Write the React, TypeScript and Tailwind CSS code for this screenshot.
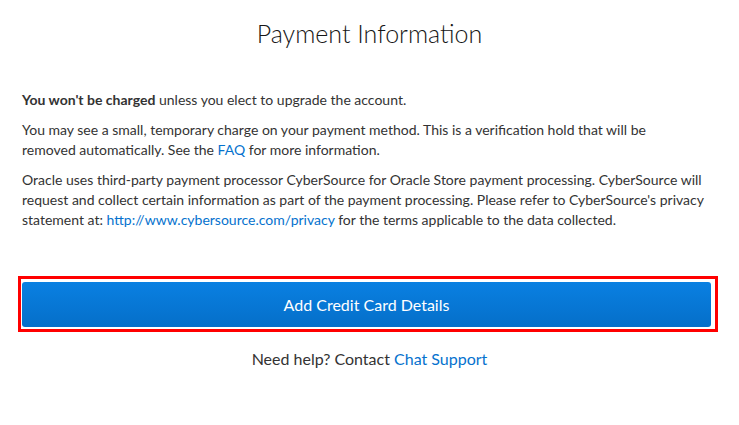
import React from 'react';

export default function App() {
  return (
    <div className="w-[739px] h-[425px] bg-white text-[#333333] font-['Lato',sans-serif]">
      <h1 className="pt-[17px] text-center text-[25px] leading-[32px] font-light text-[#161616]">
        Payment Information
      </h1>

      <div className="mt-[41px] px-[22px] text-[14px] leading-[20px] flex flex-col gap-[10px]">
        <p>
          <span className="font-bold">You won't be charged</span> unless you elect to upgrade the account.
        </p>
        <p>
          You may see a small, temporary charge on your payment method. This is a verification hold that will be
          <br />
          removed automatically. See the <a className="text-[#0572ce]">FAQ</a> for more information.
        </p>
        <p className="whitespace-nowrap">
          Oracle uses third-party payment processor CyberSource for Oracle Store payment processing. CyberSource will
          <br />
          request and collect certain information as part of the payment processing. Please refer to CyberSource's privacy
          <br />
          statement at: <a className="text-[#0572ce]">http://www.cybersource.com/privacy</a> for the terms applicable to
          the data collected.
        </p>
      </div>

      <div className="mt-[46px] ml-[18px] mr-[21px] border-[3px] border-[#ff0000] pt-[3px] pb-[2px] pl-[1px] pr-[4px]">
        <button className="w-full h-[45px] rounded-[3px] bg-gradient-to-b from-[#0a80e2] to-[#056fc9] text-white text-[16px]">
          Add Credit Card Details
        </button>
      </div>

      <p className="mt-[15px] text-center text-[16px] text-[#333333]">
        Need help? Contact <a className="text-[#0572ce]">Chat Support</a>
      </p>
    </div>
  );
}
